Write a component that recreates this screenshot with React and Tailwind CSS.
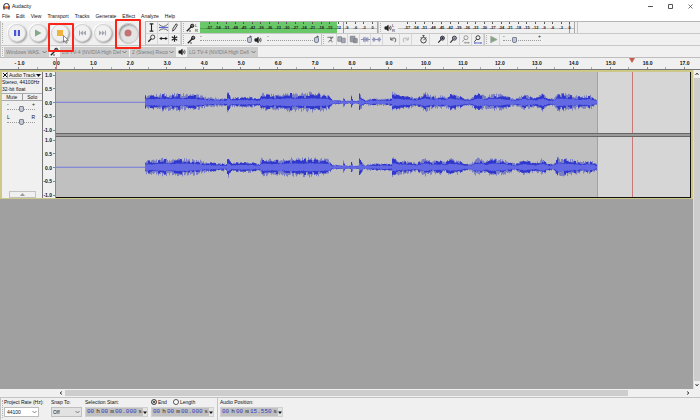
import { useState } from 'react';

const MENUS = ['File', 'Edit', 'View', 'Transport', 'Tracks', 'Generate', 'Effect', 'Analyze', 'Help'];
const DB_MARKS = Array.from({ length: 20 }, (_, i) => (i === 19 ? '0' : String(i * 3 - 57)));
const SECONDS = Array.from({ length: 19 }, (_, i) => i - 1);

// [time px, peak height] pairs of the clip's loudness
const ENVELOPE = [
  [0, 0], [88, 0], [89, 8], [96, 8], [106, 10], [114, 9], [124, 10], [134, 9], [141, 9], [149, 6], [159, 5], [170, 4],
  [171, 11], [172, 11], [175, 5], [184, 6], [194, 6], [203, 4], [205, 10], [214, 9], [224, 9], [234, 11], [244, 10],
  [254, 11], [264, 10], [272, 9], [276, 3], [286, 2], [287, 7], [289, 2], [294, 2], [295, 7], [297, 2], [302, 2],
  [303, 11], [306, 5], [309, 2], [312, 4], [335, 4], [336, 11], [344, 8], [352, 7], [360, 5], [369, 11], [376, 7],
  [384, 8], [389, 6], [394, 10], [404, 7], [408, 4], [414, 4], [421, 11], [429, 7], [435, 10], [444, 9], [454, 6],
  [459, 4], [468, 9], [479, 5], [486, 10], [492, 4], [498, 5], [501, 11], [514, 9], [524, 7], [534, 8], [541, 3],
];

const levelAt = (x) => {
  const i = ENVELOPE.findIndex(([px]) => px >= x);
  if (i <= 0) return 0;
  const [x0, a0] = ENVELOPE[i - 1];
  const [x1, a1] = ENVELOPE[i];
  return a0 + ((a1 - a0) * (x - x0)) / (x1 - x0);
};

const noise = (n) => {
  const v = Math.sin(n * 12.9898) * 43758.5453;
  return v - Math.floor(v);
};

const buildWave = (seed) => {
  let haze = '';
  let peak = '';
  let rms = '';
  for (let x = 89; x < 541; x++) {
    const a = levelAt(x);
    const top = a * (0.55 + noise(x + seed) * 0.4);
    const bottom = a * (0.5 + noise(x * 3 + seed) * 0.45);
    const mid = a * (0.4 + noise(Math.floor(x / 2) * 7 + seed) * 0.45);
    const core = Math.max(0.8, a * 0.32 + noise(x * 5 + seed) * 0.7);
    haze += `M${x}.5 ${(30 - top).toFixed(1)}V${(30 + bottom).toFixed(1)}`;
    peak += `M${x}.5 ${(30 - mid).toFixed(1)}V${(30 + mid * 0.9).toFixed(1)}`;
    rms += `M${x}.5 ${(30 - core).toFixed(1)}V${(30 + core).toFixed(1)}`;
  }
  return { haze, peak, rms };
};

const Waveform = ({ seed }) => {
  const { haze, peak, rms } = buildWave(seed);
  return (
    <svg className="block h-full w-full" viewBox="0 0 541 60" preserveAspectRatio="none">
      <path d="M0 30H89" stroke="#7379dc" />
      <path d={haze} stroke="#7b7fc6" />
      <path d={peak} stroke="#3037cd" />
      <path d={rms} stroke="#6269e2" />
    </svg>
  );
};

const Mic = () => (
  <svg className="h-[9px] w-[9px] shrink-0" viewBox="0 0 9 9" fill="none" stroke="#222">
    <path d="M.8 8.2 5 4" strokeWidth="1.3" />
    <circle cx="6.2" cy="2.8" r="1.6" fill="#777" strokeWidth="1" />
    <path d="M4.2 3 6 4.9M3 8h2" strokeWidth=".8" />
  </svg>
);

const Speaker = () => (
  <svg className="h-[8px] w-[8px] shrink-0" viewBox="0 0 9 9" fill="none" stroke="#222" strokeWidth=".8">
    <path d="M1 3.2h1.6L4.8 1.5v6L2.6 5.8H1z" fill="#222" />
    <path d="M6 3q1 1.5 0 3M7.2 2q1.8 2.5 0 5" />
  </svg>
);

const Chevron = () => (
  <svg className="pointer-events-none absolute right-[2px] top-1/2 h-[3px] w-[5px] -translate-y-1/2" viewBox="0 0 5 3">
    <path d="M.5.5l2 2 2-2" fill="none" stroke="#666" strokeWidth=".8" />
  </svg>
);

const ICONS = {
  select: <path d="M4 2h4M6 2v8M4 10h4" strokeWidth="1.2" />,
  envelope: (
    <>
      <path d="M1 2.5q5 5 10-.5M1 9.500q5-4 10 0" stroke="#555" />
      <path d="M1 6h10" stroke="#5a67e0" strokeWidth="1.4" />
    </>
  ),
  draw: <path d="M4 10l.4-3L7.6 2l1.6 1L6 8.5z" />,
  zoom: (
    <>
      <circle cx="7.3" cy="4.5" r="2.3" />
      <path d="M5.7 6.3 2.5 9.5" strokeWidth="1.4" />
    </>
  ),
  shift: (
    <>
      <path d="M2 6h8" strokeWidth="1.2" />
      <path d="M1.5 6l2.500-2v4zM10.500 6 8 4v4z" fill="#222" stroke="none" />
    </>
  ),
  multi: <path d="M6 2.5v7M3 4.2l6 3.6M9 4.2 3 7.8" strokeWidth="1.3" />,
  cut: (
    <>
      <path d="M2.500 3.500h6M9 3 4.500 8M6 3l1 5" stroke="#777" strokeWidth="1.1" />
      <path d="M3.500 8.500h1M7 8.500h1.500" stroke="#999" strokeWidth="1.300" />
    </>
  ),
  copy: <path d="M2 3h4v5H2zM6 4.5h4v5H6z" fill="#a6a9b4" stroke="#858894" />,
  paste: <path d="M2.5 2.5h5v6h-5zM6 5h4v4.5H6z" fill="#999ba3" stroke="#7e8088" />,
  trim: <path d="M1 6h10M4 3.5v5M5.5 3v6M7 4v4M8.5 3.5v5" stroke="#8e93ba" strokeWidth="1.2" />,
  silence: <path d="M1 6h10M2.5 3.5v5M4 4v4M8 4v4M9.5 3.5v5" stroke="#8e93ba" strokeWidth="1.2" />,
  undo: <path d="M3 3.5v3h3M3.2 6q2-2.6 4.6-1.4Q9.6 6.3 7.5 9" stroke="#444" />,
  redo: <path d="M9 3.5v3H6M8.8 6q-2-2.6-4.6-1.4Q2.4 6.3 4.5 9" stroke="#aaa" />,
  timer: (
    <>
      <circle cx="6" cy="6.8" r="3" />
      <path d="M6 3V1.8M4.8 1.8h2.4M6 6.8 7.5 5M3 3.5l.8.8M9 3.5l-.8.8" />
    </>
  ),
  zoomIn: (
    <>
      <circle cx="7" cy="4.5" r="2.2" fill="#8e96d8" />
      <path d="M5.4 6.2 2.5 9.3M6 4.5h2M7 3.5v2" strokeWidth="1.2" />
    </>
  ),
  zoomOut: (
    <>
      <circle cx="7" cy="4.5" r="2.2" fill="#b9bde6" />
      <path d="M5.4 6.2 2.5 9.3" strokeWidth="1.2" />
      <path d="M6 4.5h2" />
    </>
  ),
  fitSelection: (
    <>
      <circle cx="6.5" cy="4" r="2.2" stroke="#888" />
      <path d="M5 5.7 2.5 8.5M5 9.5h5M6 8.5l-1 1 1 1M9 8.5l1 1-1 1" stroke="#888" />
    </>
  ),
  fitProject: (
    <>
      <circle cx="6.5" cy="4" r="2.2" />
      <path d="M5 5.7 2.5 8.5" />
      <path d="M3 9.8h7M3 8.8v2M10 8.8v2" stroke="#4650c8" />
    </>
  ),
  playSpeed: <path d="M3 2.5v7L10 6z" fill="#86a286" stroke="#9aaa9a" />,
};

const Tool = ({ name, className = '' }) => (
  <button type="button" aria-label={name} className={`flex min-w-0 flex-1 items-center justify-center border-r border-[#d6d6d6] ${className}`}>
    <svg className="h-[11px] w-[11px] shrink-0" viewBox="0 0 12 12" fill="none" stroke="#222" strokeWidth=".9">
      {ICONS[name]}
    </svg>
  </button>
);

const Grip = () => (
  <div className="flex w-1 shrink-0 items-center justify-center self-stretch border-l border-[#c4c4c4]">
    <div className="h-4/5 border-l border-dotted border-[#b0b0b0]" />
  </div>
);

const Slider = ({ label, value, className = '' }) => {
  const [level, setLevel] = useState(value);
  return (
    <div className={`relative flex items-center ${className}`}>
      <div className="absolute inset-x-0 top-1/2 border-t border-dotted border-[#9a9a9a]" />
      <input
        type="range"
        aria-label={label}
        value={level}
        onChange={(e) => setLevel(e.target.value)}
        className="relative h-2 w-full appearance-none bg-transparent [&::-webkit-slider-thumb]:h-[6px] [&::-webkit-slider-thumb]:w-[5px] [&::-webkit-slider-thumb]:appearance-none [&::-webkit-slider-thumb]:rounded-b-[2px] [&::-webkit-slider-thumb]:rounded-t-[1px] [&::-webkit-slider-thumb]:border [&::-webkit-slider-thumb]:border-[#7b8190] [&::-webkit-slider-thumb]:bg-[#c3c9d6]"
      />
    </div>
  );
};

const VolumeSlider = ({ label, value, className = '' }) => (
  <div className={`relative text-[5px] ${className}`}>
    <span className="absolute left-0 top-0 leading-[5px]">-</span>
    <span className="absolute right-0 top-0 leading-[5px]">+</span>
    <Slider label={label} value={value} className="h-full" />
  </div>
);

const Meter = ({ level, peak, className }) => (
  <div className={`relative flex items-center border-r border-[#a8a8a8] ${className}`}>
    <div className="absolute inset-y-0 left-0 bg-[#69c968]" style={{ width: `${level}%` }} />
    <div className="absolute inset-y-0 w-px bg-[#8f93ef]" style={{ left: `${peak}%` }} />
    <div className="absolute inset-x-0 top-1/2 border-t border-black/20" />
    <div className="relative flex h-full flex-1 pl-[5px] text-[4px] font-bold leading-[7px] text-[#222]">
      {DB_MARKS.map((db) => (
        <div key={db} className="flex min-w-0 flex-1 flex-col items-center">
          <div className="h-[2px] w-px bg-[#555]" />
          <span>{db}</span>
        </div>
      ))}
    </div>
  </div>
);

const Channels = () => (
  <div className="flex w-[5px] flex-col text-[4px] leading-[5px]">
    <span>L</span>
    <span>R</span>
  </div>
);

const RoundButton = ({ label, children }) => (
  <button
    type="button"
    aria-label={label}
    className="flex h-[18px] w-[18px] shrink-0 items-center justify-center rounded-full border border-[#d2d2d2] bg-[#f1f1f1] shadow-[1px_1px_2px_#999,-1px_-1px_1px_#fff]"
  >
    <svg className="h-3 w-3" viewBox="0 0 12 12">{children}</svg>
  </button>
);

const TransportBar = () => (
  <div className="flex w-[145px] shrink-0">
    <Grip />
    <div className="ml-[2px] grid w-[108px] grid-cols-5 place-items-center">
      <RoundButton label="Pause">
        <path d="M3 3h2.200v6H3zM6.800 3H9v6H6.800z" fill="#4a55dc" />
      </RoundButton>
      <RoundButton label="Play">
        <path d="M3 2.500v7L9.500 6z" fill="#86a888" />
      </RoundButton>
      <div className="relative flex h-full w-full items-center justify-center">
        <RoundButton label="Stop">
          <path d="M3 3h6v6H3z" fill="#eeb43e" />
        </RoundButton>
        <div className="absolute -right-[3px] top-[2px] z-10 h-[29px] w-[26px] rounded-[1px] border-2 border-[#fb2418]" />
        <svg className="absolute left-[14px] top-[14px] z-20 h-[9px] w-[6px]" viewBox="0 0 6 9">
          <path d="M.5.5v6.500l1.500-1.300 1 2.600 1.200-.5-1-2.500h2.200z" fill="#fff" stroke="#444" strokeWidth=".6" />
        </svg>
      </div>
      <RoundButton label="Skip to Start">
        <path d="M3 3.500h1v5H3zM7 3.500v5L4 6zM10 3.500v5L7 6z" fill="#a4a8b4" />
      </RoundButton>
      <RoundButton label="Skip to End">
        <path d="M9 3.500H8v5h1zM5 3.500v5L8 6zM2 3.500v5L5 6z" fill="#a4a8b4" />
      </RoundButton>
    </div>
    <div className="relative flex w-[28px] items-center justify-center">
      <button
        type="button"
        aria-label="Record"
        className="flex h-[21px] w-[21px] items-center justify-center rounded-full border border-[#c4c4c4] bg-[#e4e4e4] shadow-[inset_1px_1px_2px_#888]"
      >
        <svg className="h-2 w-2" viewBox="0 0 8 8">
          <circle cx="4" cy="4" r="3.500" fill="#c27474" />
        </svg>
      </button>
      <div className="absolute -top-[2px] left-[1px] z-10 h-[30px] w-[26px] rounded-[1px] border-2 border-[#fb2418]" />
    </div>
  </div>
);

const DeviceSelect = ({ label, value, className }) => (
  <div className={`relative h-[10px] shrink-0 ${className}`}>
    <select aria-label={label} disabled className="block h-full w-full appearance-none overflow-hidden bg-[#cccccc] pl-[2px] pr-2 text-[5px] leading-[10px] text-[#7d7d7d] opacity-100">
      <option>{value}</option>
    </select>
    <Chevron />
  </div>
);

const TimeRuler = () => (
  <div className="relative h-[13px] shrink-0 overflow-hidden border-y border-b-[#777] border-t-[#bdbdbd] bg-[#f0f0f0]">
    <div className="-mr-[3px] ml-[1px] flex h-full">
      {SECONDS.map((s) => (
        <div key={s} className="flex min-w-0 flex-1 flex-col items-center justify-between pt-[2px]">
          <span className="text-[5px] font-bold leading-[7px] text-[#111]">{s < 0 ? '- 1.0' : `${s}.0`}</span>
          <div className="flex h-[2px] w-full justify-center border-r border-[#aaa]">
            <div className="w-px bg-[#888]" />
          </div>
        </div>
      ))}
    </div>
    <div className="absolute inset-y-0 left-[56px] w-px bg-[#c98282]" />
    <svg className="absolute left-[89.800%] top-0 h-[5px] w-[6px]" viewBox="0 0 6 5">
      <path d="M0 0h6L3 5z" fill="#c65f51" />
    </svg>
  </div>
);

const AmplitudeScale = () => (
  <div className="flex min-h-0 flex-1 flex-col justify-between text-right text-[5px] font-bold leading-[6px]">
    {['1.0', '0.5', '0.0', '-0.5', '-1.0'].map((v) => (
      <div key={v} className="flex items-center justify-end">
        {v}
        <div className="ml-px h-px w-[2px] bg-[#888]" />
      </div>
    ))}
  </div>
);

const PanelSlider = ({ low, high, label }) => (
  <div className="ml-[5px] mr-[7px] h-[13px]">
    <div className="flex justify-between text-[5px] leading-[5px]">
      <span>{low}</span>
      <span>{high}</span>
    </div>
    <Slider label={label} value="50" className="-mt-[2px] h-[7px]" />
  </div>
);

const TrackPanel = () => (
  <div className="flex w-[41px] shrink-0 flex-col border-r border-[#777] bg-[#f0f0f0] text-[5px] leading-[7px] text-[#111]">
    <div className="flex h-[7px] items-center border-b border-[#bbb]">
      <button type="button" aria-label="Close track" className="flex h-full w-[6px] items-center justify-center border-r border-[#999]">
        <svg className="h-[4px] w-[4px]" viewBox="0 0 4 4"><path d="M0 0l4 4M4 0 0 4" stroke="#111" /></svg>
      </button>
      <button type="button" className="flex flex-1 items-center justify-between whitespace-nowrap px-[1px]">
        Audio Track
        <svg className="h-[3px] w-[5px]" viewBox="0 0 5 3"><path d="M0 0h5L2.500 3z" fill="#111" /></svg>
      </button>
    </div>
    <div className="whitespace-nowrap">Stereo, 44100Hz</div>
    <div>32-bit float</div>
    <div className="flex h-[8px] border-y border-[#aaa] text-center leading-[6px]">
      <button type="button" className="flex-1 border-r border-[#999]">Mute</button>
      <button type="button" className="flex-1">Solo</button>
    </div>
    <div className="pt-[1px]">
      <PanelSlider low="-" high="+" label="Gain" />
      <PanelSlider low="L" high="R" label="Pan" />
    </div>
    <button type="button" aria-label="Collapse" className="mx-auto mt-auto flex h-[7px] w-[27px] items-center justify-center border border-[#c3c3c3]">
      <svg className="h-[3px] w-[5px]" viewBox="0 0 5 3"><path d="M0 3h5L2.500 0z" fill="#999" /></svg>
    </button>
  </div>
);

const Channel = ({ seed }) => (
  <div className="relative min-h-0 flex-1 bg-[#d6d6d6]">
    <div className="h-full w-[85.500%] border-r border-[#a2a2a2] bg-[#c0c0c0]">
      <Waveform seed={seed} />
    </div>
    <div className="absolute inset-y-0 left-[90.800%] w-px bg-[#c97878]" />
  </div>
);

const Track = () => (
  <div className="flex h-[129px] border-2 border-b border-[#cdc888]">
    <TrackPanel />
    <div className="flex w-[13px] shrink-0 flex-col gap-[4px] border-r border-[#888] bg-[#f0f0f0]">
      <AmplitudeScale />
      <AmplitudeScale />
    </div>
    <div className="flex flex-1 flex-col border-b border-r border-[#111]">
      <Channel seed={1} />
      <div className="h-[4px] border-y border-[#666] bg-[#9b9b9b]" />
      <Channel seed={50} />
    </div>
  </div>
);

const TimeField = ({ label, id, seconds }) => (
  <div className="flex h-[10px] w-[63px] items-center border border-[#d0d0d0] bg-[#c0c0c0] pl-[1px] font-['Liberation_Mono',monospace] text-[6px] leading-[8px] text-[#222]">
    <input id={id} aria-label={`${label} hours`} defaultValue="00" className="w-[8px] text-[#3038c0]" />
    <span className="flex-1 text-center">h</span>
    <input aria-label={`${label} minutes`} defaultValue="00" className="w-[8px] text-[#3038c0]" />
    <span className="flex-1 text-center">m</span>
    <input aria-label={`${label} seconds`} defaultValue={seconds} className="w-[22px] text-[#3038c0]" />
    <span className="flex-1 text-center">s</span>
    <button type="button" aria-label={`${label} format`} className="flex h-full w-[4px] items-center bg-[#e4e4e4]">
      <svg className="h-[3px] w-[4px]" viewBox="0 0 4 3"><path d="M0 .5h4L2 3z" fill="#111" /></svg>
    </button>
  </div>
);

const Radio = ({ label, ...props }) => (
  <label className="flex items-center gap-[1px]">
    <input
      type="radio"
      name="range"
      {...props}
      className="h-[6px] w-[6px] appearance-none rounded-full border border-[#555] bg-white checked:bg-[#222] checked:shadow-[inset_0_0_0_1px_#fff]"
    />
    {label}
  </label>
);

const SelectionBar = () => (
  <div className="flex h-[23px] shrink-0 border-t border-[#c4c4c4] bg-[#f0f0f0] text-[5px] leading-[8px] text-[#111]">
    <Grip />
    <div className="w-[45px]">
      <label htmlFor="rate" className="mb-[1px] block whitespace-nowrap">Project Rate (Hz):</label>
      <div className="relative h-[10px] w-[35px]">
        <select id="rate" className="block h-full w-full appearance-none border border-[#bbb] bg-white pl-[2px]">
          <option>44100</option>
        </select>
        <Chevron />
      </div>
    </div>
    <div className="w-[36px] pl-[2px]">
      <label htmlFor="snap" className="mb-[1px] block">Snap To:</label>
      <div className="relative h-[10px] w-[31px]">
        <select id="snap" className="block h-full w-full appearance-none border border-[#bfbfbf] bg-[#e2e2e2] pl-[1px]">
          <option>Off</option>
        </select>
        <Chevron />
      </div>
    </div>
    <div className="w-[66px]">
      <label htmlFor="start" className="mb-[1px] block">Selection Start:</label>
      <TimeField id="start" label="Selection start" seconds="00.000" />
    </div>
    <div className="w-[67px] border-r border-[#c4c4c4]">
      <div className="mb-[1px] flex h-[8px] items-center gap-[6px]">
        <Radio label="End" defaultChecked />
        <Radio label="Length" />
      </div>
      <TimeField id="end" label="Selection end" seconds="00.000" />
    </div>
    <div className="pl-[2px]">
      <label htmlFor="position" className="mb-[1px] block">Audio Position:</label>
      <TimeField id="position" label="Audio position" seconds="15.550" />
    </div>
  </div>
);

const Arrow = ({ turn }) => (
  <svg className={`h-[4px] w-[4px] ${turn}`} viewBox="0 0 4 4">
    <path d="M.5 3 2 1l1.500 2" fill="none" stroke="#444" />
  </svg>
);

export default function App() {
  return (
    <div className="flex h-screen flex-col overflow-hidden bg-[#f0f0f0] font-['Liberation_Sans',Arial,sans-serif] text-[#111]">
      <header className="flex h-3 shrink-0 items-center bg-white pl-[3px] text-[5px] leading-[8px]">
        <svg className="mr-[2px] h-[7px] w-[7px]" viewBox="0 0 7 7">
          <path d="M.8 4.500V3a2.700 2.500 0 0 1 5.400 0v1.500" fill="none" stroke="#223" strokeWidth="1" />
          <path d="M1.500 3h4v3h-4z" fill="#f19a27" />
          <path d="M.3 3.500h1.500v3H.3zM5.200 3.500h1.500v3H5.200z" fill="#3a3560" />
          <path d="M2.500 4.700h2" stroke="#d33" />
        </svg>
        <h1 className="flex-1">Audacity</h1>
        <div className="flex w-[59px] items-center justify-between px-[7px]">
          <button type="button" aria-label="Minimize"><svg className="h-[5px] w-[5px]" viewBox="0 0 5 5"><path d="M0 2.500h5" stroke="#555" /></svg></button>
          <button type="button" aria-label="Maximize"><svg className="h-[5px] w-[5px]" viewBox="0 0 5 5"><path d="M.5.5h4v4h-4z" fill="none" stroke="#555" /></svg></button>
          <button type="button" aria-label="Close"><svg className="h-[5px] w-[5px]" viewBox="0 0 5 5"><path d="M.5.5l4 4M4.500.5l-4 4" stroke="#555" strokeWidth=".8" /></svg></button>
        </div>
      </header>

      <nav className="flex h-[9px] shrink-0 gap-[6px] bg-white pl-[2px] text-[5px] leading-[9px]">
        {MENUS.map((m) => (
          <button key={m} type="button">{m}</button>
        ))}
      </nav>

      <div className="flex h-6 shrink-0">
        <TransportBar />
        <div className="grid w-9 shrink-0 grid-cols-3 grid-rows-2 border-l border-t border-[#b5b5b5]">
          {['select', 'envelope', 'draw', 'zoom', 'shift', 'multi'].map((t) => (
            <Tool key={t} name={t} className="border-b" />
          ))}
        </div>
        <div className="flex min-w-0 flex-1 flex-col">
          <div className="flex h-3 items-stretch border-t border-[#b5b5b5]">
            <Grip />
            <div className="flex w-[15px] items-center pl-[1px]"><Mic /><Channels /></div>
            <Meter level={77.5} peak={81} className="w-[178px]" />
            <Grip />
            <div className="flex w-[16px] items-center pl-[2px]"><Speaker /><Channels /></div>
            <Meter level={0} peak={97} className="w-[177px]" />
            <div className="w-[3px] border-r border-[#c4c4c4]" />
          </div>
          <div className="flex h-3 items-stretch border-t border-[#c8c8c8]">
            <Grip />
            <div className="flex w-[15px] items-center pl-[2px]"><Mic /></div>
            <VolumeSlider label="Recording volume" value="100" className="w-[52px]" />
            <div className="flex w-[15px] items-center pl-[2px]"><Speaker /></div>
            <VolumeSlider label="Playback volume" value="100" className="mr-[2px] w-[52px]" />
            <Grip />
            <div className="flex w-[58px]">
              {['cut', 'copy', 'paste', 'trim', 'silence'].map((t) => <Tool key={t} name={t} />)}
            </div>
            <div className="ml-[5px] flex w-6">
              <Tool name="undo" />
              <Tool name="redo" />
            </div>
            <div className="ml-[6px] flex w-3"><Tool name="timer" /></div>
            <div className="ml-[6px] flex w-12">
              {['zoomIn', 'zoomOut', 'fitSelection', 'fitProject'].map((t) => <Tool key={t} name={t} />)}
            </div>
            <Grip />
            <div className="flex w-3"><Tool name="playSpeed" /></div>
            <VolumeSlider label="Playback speed" value="27" className="ml-[3px] w-[38px]" />
          </div>
        </div>
      </div>

      <div className="flex h-3 shrink-0 items-center border-t border-[#c8c8c8]">
        <Grip />
        <DeviceSelect label="Audio host" value="Windows WAS." className="w-[45px]" />
        <div className="flex w-[11px] shrink-0 justify-center"><Mic /></div>
        <DeviceSelect label="Recording device" value="LG TV-4 (NVIDIA High Defi" className="w-[69px]" />
        <DeviceSelect label="Recording channels" value="2 (Stereo) Recor" className="ml-[1px] w-[46px]" />
        <div className="flex w-[11px] shrink-0 justify-center"><Speaker /></div>
        <DeviceSelect label="Playback device" value="LG TV-4 (NVIDIA High Defi" className="w-[71px]" />
      </div>

      <TimeRuler />

      <main className="flex min-h-0 flex-1">
        <div className="flex-1 bg-[#a0a0a0]">
          <Track />
        </div>
        <div className="flex w-[7px] shrink-0 flex-col items-center border-l border-[#ddd] bg-[#f0f0f0]">
          <div className="flex h-2 items-center"><Arrow turn="" /></div>
          <div className="w-[6px] flex-1 bg-[#cdcdcd]" />
          <div className="flex h-2 items-center"><Arrow turn="rotate-180" /></div>
        </div>
      </main>

      <div className="flex h-2 shrink-0 items-center bg-[#f0f0f0] pl-[57px] pr-2">
        <div className="flex w-2 justify-center"><Arrow turn="-rotate-90" /></div>
        <div className="flex flex-1"><div className="h-[6px] w-[91%] bg-[#cdcdcd]" /></div>
        <div className="flex w-2 justify-center"><Arrow turn="rotate-90" /></div>
      </div>

      <SelectionBar />
    </div>
  );
}
